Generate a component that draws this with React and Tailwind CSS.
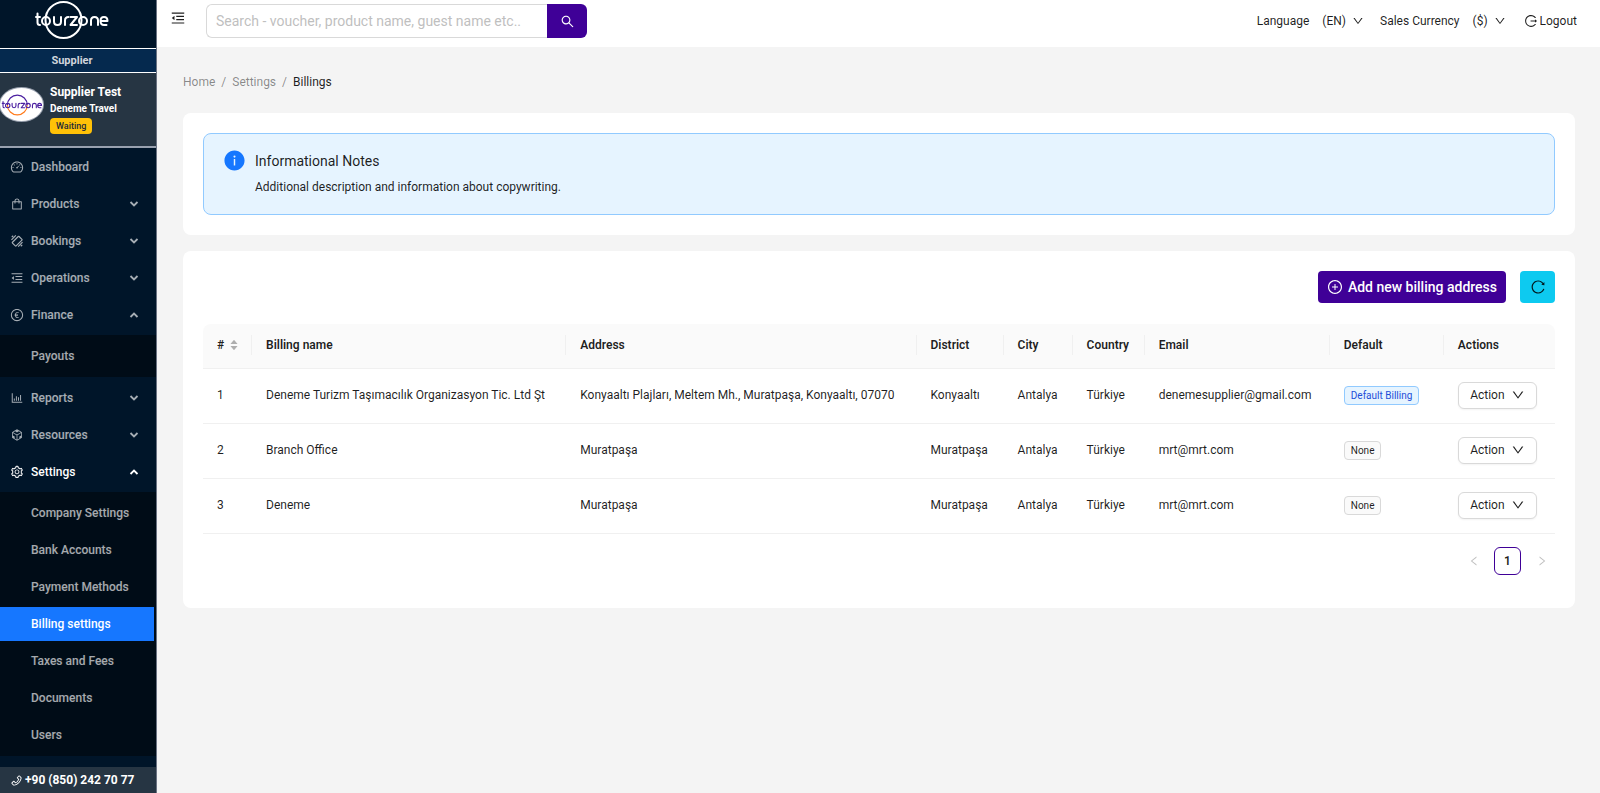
import React, { useState } from 'react';
import {
  AiOutlineDashboard,
  AiOutlineShopping,
  AiOutlineMenuFold,
  AiOutlineEuroCircle,
  AiOutlineBarChart,
  AiOutlineCodeSandbox,
  AiOutlineSetting,
  AiOutlinePhone,
  AiOutlineSearch,
  AiOutlineDown,
  AiOutlineLeft,
  AiOutlineRight,
  AiOutlineLogout,
  AiFillInfoCircle,
  AiOutlinePlusCircle,
  AiOutlineReload,
  AiFillCaretUp,
  AiFillCaretDown,
} from 'react-icons/ai';

const TicketIcon = ({ className }) => (
  <svg viewBox="0 0 24 24" className={className} fill="none" stroke="currentColor" strokeWidth="2">
    <rect x="8" y="4" width="9" height="16" rx="1" transform="rotate(45 12 12)" />
    <path d="M2.500 10l7.500-7.500M3 5.500l2.500-2.500M14 21.500l7.500-7.500M18.500 21l2.500-2.500" />
  </svg>
);

const menuItems = [
  { label: 'Dashboard', icon: AiOutlineDashboard },
  { label: 'Products', icon: AiOutlineShopping, children: [] },
  { label: 'Bookings', icon: TicketIcon, children: [] },
  { label: 'Operations', icon: AiOutlineMenuFold, children: [] },
  { label: 'Finance', icon: AiOutlineEuroCircle, open: true, children: ['Payouts'] },
  { label: 'Reports', icon: AiOutlineBarChart, children: [] },
  { label: 'Resources', icon: AiOutlineCodeSandbox, children: [] },
  {
    label: 'Settings',
    icon: AiOutlineSetting,
    open: true,
    active: true,
    children: [
      'Company Settings',
      'Bank Accounts',
      'Payment Methods',
      'Billing settings',
      'Taxes and Fees',
      'Documents',
      'Users',
    ],
  },
];

const billings = [
  {
    id: 1,
    name: 'Deneme Turizm Taşımacılık Organizasyon Tic. Ltd Şt',
    address: 'Konyaaltı Plajları, Meltem Mh., Muratpaşa, Konyaaltı, 07070',
    district: 'Konyaaltı',
    city: 'Antalya',
    country: 'Türkiye',
    email: 'denemesupplier@gmail.com',
    isDefault: true,
  },
  { id: 2, name: 'Branch Office', address: 'Muratpaşa', district: 'Muratpaşa', city: 'Antalya', country: 'Türkiye', email: 'mrt@mrt.com' },
  { id: 3, name: 'Deneme', address: 'Muratpaşa', district: 'Muratpaşa', city: 'Antalya', country: 'Türkiye', email: 'mrt@mrt.com' },
];

const columns = [
  { title: '#', width: 'w-[49px]', sortable: true },
  { title: 'Billing name', width: 'w-[314px]' },
  { title: 'Address', width: 'w-[350px]' },
  { title: 'District', width: 'w-[87px]' },
  { title: 'City', width: 'w-[69px]' },
  { title: 'Country', width: 'w-[72px]' },
  { title: 'Email', width: 'w-[185px]' },
  { title: 'Default', width: 'w-[114px]' },
  { title: 'Actions', width: 'w-[111px]' },
];

const Logo = ({ className, ring, ringEnd, word }) => (
  <svg viewBox="0 0 74 40" className={className} role="img" aria-label="tourzone">
    <path d="M10.500 20a18 18 0 0 1 36 0" fill="none" stroke={ring} strokeWidth="2" />
    <path d="M10.500 20a18 18 0 0 0 36 0" fill="none" stroke={ringEnd} strokeWidth="2" />
    <g fill="none" stroke={word} strokeWidth="2" strokeLinecap="round" strokeLinejoin="round">
      <path d="M2.500 13.500v9q0 2.500 2.500 2.500M1 17h4" />
      <circle cx="11" cy="21" r="4" />
      <path d="M19 17v4.500q0 3.500 3.500 3.500t3.500-3.500V17" />
      <path d="M30 25v-4.500q0-3.500 3.500-3.500" />
      <path d="M35.500 17h6.500l-6.500 8h6.500" />
      <circle cx="48" cy="21" r="4" />
      <path d="M56 25v-4.500q0-3.500 3.500-3.500t3.500 3.500V25" />
      <path d="M65.500 21h7q0-4-3.500-4t-3.500 4 3.500 4h2.500" />
    </g>
  </svg>
);

const MenuArrow = ({ open }) => (
  <svg viewBox="0 0 10 10" className="h-[10px] w-[10px]" fill="none" stroke="currentColor" strokeWidth="1.8">
    <path d={open ? 'M1.500 7L5 3.500 8.500 7' : 'M1.500 3L5 6.500 8.500 3'} />
  </svg>
);

const Sidebar = () => {
  const [openMenus, setOpenMenus] = useState(menuItems.filter((m) => m.open).map((m) => m.label));

  const toggleMenu = (label) => {
    setOpenMenus((prev) => (prev.includes(label) ? prev.filter((l) => l !== label) : [...prev, label]));
  };

  return (
    <aside className="flex w-[157px] shrink-0 flex-col border-r border-gray-500 bg-[#001529] font-medium text-white">
      <a href="#home" className="flex h-12 items-start justify-center pr-3">
        <Logo className="h-10 w-[74px]" ring="#fff" ringEnd="#fff" word="#fff" />
      </a>
      <div className="h-[25px] border-y border-white bg-[#05294e] pr-3 text-center text-[11px] leading-6 font-bold text-gray-300">
        Supplier
      </div>
      <div className="flex h-[75px] border-b-2 border-gray-400 bg-[#263543]">
        <div className="mt-[15px] flex h-[33px] w-[43px] shrink-0 items-center justify-center rounded-[50%] bg-white ring-1 ring-gray-400">
          <Logo className="h-[22px] w-[42px]" ring="#4b1fa0" ringEnd="#ff7a1a" word="#4b1fa0" />
        </div>
        <div className="ml-[7px] pt-[11px] font-bold whitespace-nowrap">
          <p className="text-xs leading-4">Supplier Test</p>
          <p className="text-[10px] leading-[17px]">Deneme Travel</p>
          <span className="mt-px block w-fit rounded bg-[#ffc107] px-[6px] text-[9px] leading-4 font-medium text-gray-800">
            Waiting
          </span>
        </div>
      </div>

      <nav className="flex flex-1 flex-col gap-1 pt-[2px] text-xs text-white/65">
        {menuItems.map((item) => {
          const Icon = item.icon;
          const isOpen = openMenus.includes(item.label);
          return (
            <div key={item.label} className="flex flex-col gap-1">
              <button
                type="button"
                onClick={() => item.children && toggleMenu(item.label)}
                className={`flex h-[33px] w-full items-center pr-[17px] pl-[10px] text-left ${item.active ? 'text-white' : ''}`}
              >
                <Icon className="h-[14px] w-[14px]" />
                <span className="ml-[7px] flex-1">{item.label}</span>
                {item.children && <MenuArrow open={isOpen} />}
              </button>
              {isOpen && (
                <ul className="flex flex-col gap-[3px] bg-[#000c17] py-1">
                  {item.children.map((child) => (
                    <li key={child}>
                      <a
                        href="#menu"
                        className={`mr-[2px] block pl-[31px] leading-[34px] ${
                          child === 'Billing settings' ? 'bg-[#1677ff] text-white' : ''
                        }`}
                      >
                        {child}
                      </a>
                    </li>
                  ))}
                </ul>
              )}
            </div>
          );
        })}
      </nav>

      <a href="tel:+908502427077" className="flex h-[26px] items-center bg-[#263543] pl-[10px] text-xs font-bold">
        <AiOutlinePhone className="mr-[2px] h-[13px] w-[13px]" />
        +90 (850) 242 70 77
      </a>
    </aside>
  );
};

const Header = () => (
  <header className="flex h-[47px] items-center bg-white pr-[23px] pb-[5px] pl-[13px]">
    <button type="button" aria-label="Toggle menu">
      <AiOutlineMenuFold className="mb-[6px] h-4 w-4" />
    </button>
    <form className="ml-5 flex h-[34px] w-[381px]" onSubmit={(e) => e.preventDefault()}>
      <input
        type="text"
        aria-label="Search"
        placeholder="Search - voucher, product name, guest name etc.."
        className="min-w-0 flex-1 rounded-l-md border border-r-0 border-[#d9d9d9] px-[9px] text-sm outline-none placeholder:text-[#bfbfbf]"
      />
      <button type="submit" aria-label="Search" className="flex w-10 items-center justify-center rounded-r-md bg-[#3f0097] text-white">
        <AiOutlineSearch className="h-[15px] w-[15px]" />
      </button>
    </form>
    <div className="ml-auto flex items-center">
      <span>Language</span>
      <button type="button" className="ml-[13px] flex items-center gap-[6px]">
        (EN) <AiOutlineDown className="h-3 w-3" />
      </button>
      <span className="ml-4">Sales Currency</span>
      <button type="button" className="ml-[13px] flex items-center gap-[6px]">
        ($) <AiOutlineDown className="h-3 w-3" />
      </button>
      <a href="#logout" className="ml-[18px] flex items-center gap-[2px]">
        <AiOutlineLogout className="h-[14px] w-[14px]" />
        Logout
      </a>
    </div>
  </header>
);

const BillingTable = () => (
  <table className="w-full table-fixed border-separate border-spacing-0 text-left">
    <thead>
      <tr>
        {columns.map((col, i) => (
          <th
            key={col.title}
            className={`h-[45px] border-b border-[#f0f0f0] bg-[#fafafa] p-0 pb-[2px] font-semibold text-black/88 first:rounded-tl-lg last:rounded-tr-lg ${col.width}`}
          >
            <div
              className={`flex h-5 items-center pl-[14px] whitespace-nowrap ${
                i < columns.length - 1 ? 'border-r border-[#f0f0f0]' : ''
              }`}
            >
              {col.title}
              {col.sortable && (
                <button type="button" aria-label="Sort" className="ml-[5px] flex flex-col text-black/30">
                  <AiFillCaretUp className="h-[10px] w-[10px]" />
                  <AiFillCaretDown className="-mt-1 h-[10px] w-[10px]" />
                </button>
              )}
            </div>
          </th>
        ))}
      </tr>
    </thead>
    <tbody>
      {billings.map((row) => (
        <tr
          key={row.id}
          className="[&>td]:h-[55px] [&>td]:border-b [&>td]:border-[#f0f0f0] [&>td]:pb-[2px] [&>td]:pl-[14px] [&>td]:whitespace-nowrap"
        >
          <td>{row.id}</td>
          <td>{row.name}</td>
          <td>{row.address}</td>
          <td>{row.district}</td>
          <td>{row.city}</td>
          <td>{row.country}</td>
          <td>{row.email}</td>
          <td>
            <span
              className={`inline-block rounded border px-[6px] text-[10px] leading-[17px] ${
                row.isDefault ? 'border-[#91caff] bg-[#e6f4ff] text-[#1d4ed8]' : 'border-[#d9d9d9] bg-[#fafafa]'
              }`}
            >
              {row.isDefault ? 'Default Billing' : 'None'}
            </span>
          </td>
          <td>
            <button
              type="button"
              className="flex h-[27px] w-[79px] items-center justify-center gap-[6px] rounded-md border border-[#d9d9d9] bg-white shadow-xs"
            >
              Action <AiOutlineDown className="h-[14px] w-[14px]" />
            </button>
          </td>
        </tr>
      ))}
    </tbody>
  </table>
);

const App = () => {
  return (
    <div className="flex min-h-screen bg-[#f4f4f4] font-['Roboto',sans-serif] text-xs text-black/88">
      <Sidebar />
      <div className="min-w-0 flex-1">
        <Header />
        <main className="pr-[25px] pl-[26px]">
          <nav aria-label="Breadcrumb" className="flex h-[66px] items-center gap-[6px] pt-[3px] text-black/45">
            <a href="#home">Home</a>
            <span>/</span>
            <a href="#settings">Settings</a>
            <span>/</span>
            <span className="text-black/88">Billings</span>
          </nav>

          <section className="rounded-lg bg-white p-5">
            <div className="flex h-[82px] rounded-lg border border-[#91caff] bg-[#e6f4ff] px-[19px] pt-[15px]">
              <AiFillInfoCircle className="h-[23px] w-[23px] text-[#1677ff]" />
              <div className="ml-[9px]">
                <h2 className="text-sm leading-6">Informational Notes</h2>
                <p className="mt-1 text-xs leading-5">Additional description and information about copywriting.</p>
              </div>
            </div>
          </section>

          <section className="mt-4 rounded-lg bg-white px-5 pt-5 pb-[33px]">
            <div className="mb-[21px] flex justify-end gap-[14px]">
              <button type="button" className="flex h-8 items-center gap-[5px] rounded bg-[#3f0097] px-[9px] text-sm font-medium text-white">
                <AiOutlinePlusCircle className="h-4 w-4" />
                Add new billing address
              </button>
              <button type="button" aria-label="Refresh" className="flex h-8 w-[35px] items-center justify-center rounded bg-[#0dcaf0]">
                <AiOutlineReload className="h-4 w-4" />
              </button>
            </div>

            <BillingTable />

            <div className="mt-[13px] flex h-7 items-center justify-end">
              <button type="button" aria-label="Previous page" disabled className="flex w-[27px] justify-center text-black/25">
                <AiOutlineLeft className="h-3 w-3" />
              </button>
              <button type="button" className="mx-[7px] h-7 w-[27px] rounded-md border border-[#3f0097] text-xs font-semibold">
                1
              </button>
              <button type="button" aria-label="Next page" disabled className="flex w-[27px] justify-center text-black/25">
                <AiOutlineRight className="h-3 w-3" />
              </button>
            </div>
          </section>
        </main>
      </div>
    </div>
  );
};

export default App;
